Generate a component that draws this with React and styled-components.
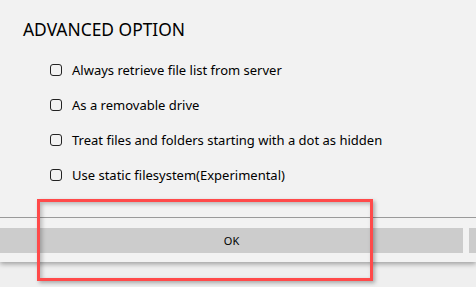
import React from "react";
import styled, { createGlobalStyle } from "styled-components";

const Global = createGlobalStyle`
  html, body { margin: 0; padding: 0; background: #efefef; }
  body { font-family: "Noto Sans", "Open Sans", sans-serif; color: #000; }
`;

const Page = styled.div`
  position: relative;
  width: 476px;
  height: 287px;
  overflow: hidden;
  background: #efefef;
`;

const Dialog = styled.div`
  background: #f2f2f2;
  height: 262px;
  box-shadow: 0 2px 5px rgba(0, 0, 0, 0.35);
  display: flex;
  flex-direction: column;
`;

const Title = styled.h1`
  margin: 0;
  padding: 17px 0 0 23px;
  font-size: 17.4px;
  font-weight: 400;
  line-height: 25px;
  letter-spacing: 0;
`;

const Options = styled.div`
  display: flex;
  flex-direction: column;
  gap: 15px;
  padding: 18px 0 0 50px;
`;

const Row = styled.label`
  display: flex;
  align-items: center;
  gap: 10px;
  height: 20px;
  font-size: 13px;
`;

const Box = styled.span`
  width: 10px;
  height: 10px;
  border: 1.7px solid #222;
  border-radius: 3px;
  flex: none;
`;

const Separator = styled.div`
  margin-top: auto;
  height: 1px;
  background: #9a9a9a;
`;

const ButtonBar = styled.div`
  display: flex;
  gap: 6px;
  padding: 10px 0 9px 0;
  height: 25px;
`;

const Button = styled.div`
  flex: ${(p) => (p.$grow ? "0 0 463px" : "1 1 auto")};
  background: #cccccc;
  display: flex;
  align-items: center;
  justify-content: center;
  font-size: 11px;
  color: #000;
`;

const Highlight = styled.div`
  position: absolute;
  left: 37px;
  top: 199px;
  width: 330px;
  height: 76px;
  border: 3px solid #ff4a4a;
  box-shadow: 2px 2px 4px rgba(0, 0, 0, 0.3), inset 2px 2px 4px rgba(0, 0, 0, 0.25);
  pointer-events: none;
`;

const options = [
  "Always retrieve file list from server",
  "As a removable drive",
  "Treat files and folders starting with a dot as hidden",
  "Use static filesystem(Experimental)",
];

export default function App() {
  return (
    <Page>
      <Global />
      <Dialog>
        <Title>ADVANCED OPTION</Title>
        <Options>
          {options.map((o) => (
            <Row key={o}>
              <Box />
              {o}
            </Row>
          ))}
        </Options>
        <Separator />
        <ButtonBar>
          <Button $grow>OK</Button>
          <Button />
        </ButtonBar>
      </Dialog>
      <Highlight />
    </Page>
  );
}
